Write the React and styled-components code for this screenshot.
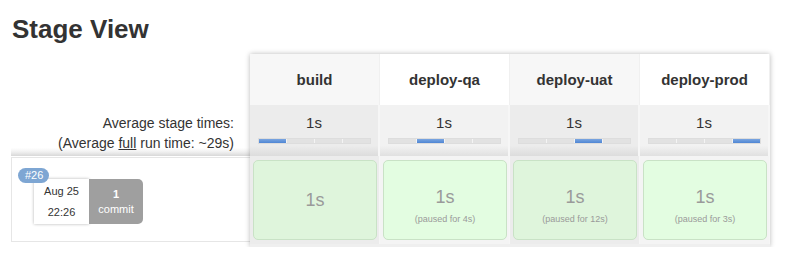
import React from "react"
import styled, { createGlobalStyle } from "styled-components"

const GlobalStyle = createGlobalStyle`
  body {
    margin: 0;
    background: #fff;
    font-family: "Liberation Sans", Arial, sans-serif;
    color: #333;
  }
`

const stages = [
  { name: "build", paused: null },
  { name: "deploy-qa", paused: "4s" },
  { name: "deploy-uat", paused: "12s" },
  { name: "deploy-prod", paused: "3s" },
]

const Page = styled.div`
  padding: 14px 0 0 11px;
  width: 785px;
  box-sizing: border-box;
`

const Title = styled.h2`
  margin: 0 0 9px 1px;
  font-size: 26px;
  line-height: 31px;
  font-weight: bold;
  color: #333;
`

const StageTable = styled.div`
  display: flex;
  align-items: flex-start;
`

const LeftCol = styled.div`
  width: 239px;
  flex: none;
  display: flex;
  flex-direction: column;
`

const HeadSpacer = styled.div`
  height: 51px;
`

const AvgLabel = styled.div`
  height: 51px;
  box-sizing: border-box;
  padding: 8px 16px 0 0;
  text-align: right;
  font-size: 14px;
  line-height: 20px;
  color: #333;
  background: linear-gradient(to bottom, #fff 0%, #fff 84%, #f0f0f0 92%, #d8d8d8 100%);

  u {
    text-decoration: underline;
  }
`

const RunRow = styled.div`
  height: 85px;
  margin-top: 1px;
  box-sizing: border-box;
  border: 1px solid #e6e6e6;
  border-right: none;
  padding: 7px 0 0 6px;
`

const Badge = styled.span`
  display: inline-block;
  background: #7ea6d3;
  color: #fff;
  font-size: 11px;
  line-height: 15px;
  padding: 0 6px 0 7px;
  border-radius: 8px;
  position: relative;
  z-index: 1;
`

const RunInfo = styled.div`
  display: flex;
  margin: -4px 0 0 16px;
`

const DateBox = styled.div`
  width: 55px;
  height: 45px;
  background: #fff;
  box-shadow: 0 0 3px rgba(0, 0, 0, 0.3);
  display: flex;
  flex-direction: column;
  align-items: center;
  justify-content: center;
  gap: 8px;
  font-size: 11px;
  line-height: 13px;
  color: #333;
`

const CommitBox = styled.div`
  width: 54px;
  height: 45px;
  background: #9f9f9f;
  border-radius: 0 5px 5px 0;
  color: #fff;
  font-size: 11px;
  line-height: 15px;
  display: flex;
  flex-direction: column;
  align-items: center;
  justify-content: center;

  b {
    font-weight: bold;
  }
`

const Panel = styled.div`
  display: grid;
  grid-template-columns: repeat(4, 130px);
  grid-template-rows: 51px 51px 88px;
  box-shadow: 0 0 5px rgba(0, 0, 0, 0.28);
  background: #efefef;
  padding-bottom: 3px;
`

const HeadCell = styled.div`
  background: ${(p) => (p.$odd ? "#f7f7f7" : "#fff")};
  display: flex;
  align-items: center;
  justify-content: center;
  font-size: 15px;
  font-weight: bold;
  color: #333;
  border-right: 1px solid #f0f0f0;
`

const AvgCell = styled.div`
  background: ${(p) =>
    p.$odd
      ? "linear-gradient(to bottom, #ececec 0%, #ececec 80%, #dcdcdc 100%)"
      : "linear-gradient(to bottom, #f2f2f2 0%, #f2f2f2 80%, #e0e0e0 100%)"};
  border-right: 2px solid #f6f6f6;
  display: flex;
  flex-direction: column;
  align-items: center;
  padding-top: 9px;
  box-sizing: border-box;
  font-size: 15px;
  line-height: 18px;
  color: #333;
`

const Track = styled.div`
  width: 111px;
  height: 4px;
  margin-top: 6px;
  display: grid;
  grid-template-columns: repeat(4, 1fr);
  gap: 1px;
  background: #f4f4f4;
  border: 1px solid #ddd;
`

const Seg = styled.div`
  background: ${(p) => (p.$on ? "linear-gradient(#7aa5e0, #4f86d4)" : "#e2e2e2")};
`

const StageCell = styled.div`
  background: ${(p) => (p.$odd ? "#ececec" : "#f4f4f4")};
  padding: 4px 2px 0 3px;
  border-right: 1px solid #f6f6f6;
`

const Box = styled.div`
  height: 80px;
  box-sizing: border-box;
  border: 1px solid #c9e2c6;
  border-radius: 5px;
  background: ${(p) => (p.$odd ? "#dff5dc" : "#e3fde1")};
  display: flex;
  flex-direction: column;
  align-items: center;
  justify-content: center;
  color: #9a9a9a;
`

const Dur = styled.div`
  font-size: 18px;
  line-height: 22px;
  margin-top: ${(p) => (p.$paused ? "10px" : "0")};
`

const Paused = styled.div`
  font-size: 9px;
  line-height: 12px;
  margin-top: 5px;
`

export default function App() {
  return (
    <Page>
      <GlobalStyle />
      <Title>Stage View</Title>
      <StageTable>
        <LeftCol>
          <HeadSpacer />
          <AvgLabel>
            Average stage times:
            <br />
            (Average <u>full</u> run time: ~29s)
          </AvgLabel>
          <RunRow>
            <Badge>#26</Badge>
            <RunInfo>
              <DateBox>
                <span>Aug 25</span>
                <span>22:26</span>
              </DateBox>
              <CommitBox>
                <b>1</b>
                <span>commit</span>
              </CommitBox>
            </RunInfo>
          </RunRow>
        </LeftCol>
        <Panel>
          {stages.map((s, i) => (
            <HeadCell key={s.name} $odd={i % 2 === 0}>
              {s.name}
            </HeadCell>
          ))}
          {stages.map((s, i) => (
            <AvgCell key={s.name + "-avg"} $odd={i % 2 === 0}>
              1s
              <Track>
                {[0, 1, 2, 3].map((k) => (
                  <Seg key={k} $on={k === i} />
                ))}
              </Track>
            </AvgCell>
          ))}
          {stages.map((s, i) => (
            <StageCell key={s.name + "-cell"} $odd={i % 2 === 0}>
              <Box $odd={i % 2 === 0}>
                <Dur $paused={!!s.paused}>1s</Dur>
                {s.paused && <Paused>(paused for {s.paused})</Paused>}
              </Box>
            </StageCell>
          ))}
        </Panel>
      </StageTable>
    </Page>
  )
}
